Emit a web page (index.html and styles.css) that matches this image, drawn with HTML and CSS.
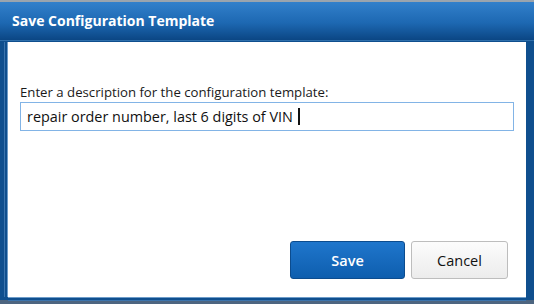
FILE: index.html
```html
<!DOCTYPE html>
<html>
<head>
    <meta charset="UTF-8">
    <title>Save Configuration Template</title>
    <link rel="stylesheet" href="styles.css">
</head>
<body>
    <div class="window">
        <div class="title-bar">Save Configuration Template</div>
        <div class="client">
            <div class="form">
                <label class="prompt" for="description">Enter a description for the configuration template:</label>
                <div class="text-box" id="description">repair order number, last 6 digits of VIN<span class="caret"></span></div>
            </div>
            <div class="actions">
                <button class="btn btn-primary">Save</button>
                <button class="btn btn-secondary">Cancel</button>
            </div>
        </div>
    </div>
</body>
</html>
```

FILE: styles.css
```css
html, body {
    margin: 0;
    padding: 0;
}
body {
    width: 534px;
    height: 304px;
    overflow: hidden;
    background: #4d6580;
    font-family: "Open Sans", "Noto Sans", sans-serif;
}
.window {
    height: 298px;
    border-top: 2px solid #9aa4ae;
    background: #0f4f8e;
    display: flex;
    flex-direction: column;
}
.title-bar {
    height: 39px;
    box-sizing: border-box;
    padding: 0 12px 2px 12px;
    display: flex;
    align-items: center;
    background: linear-gradient(#3280cb, #1d68b2 55%, #0b4684);
    border-bottom: 1px solid #2f6fab;
    color: white;
    font-weight: bold;
    font-size: 14px;
}
.client {
    flex: 1;
    margin: 1px 8px 3px 8px;
    background: white;
    box-shadow: -1px 0 0 #6d9cc9, 0 1px 0 #6d9cc9, -3px 0 0 #0f4f8e, -4px 0 0 #3b74ad, 0 3px 0 #0f4f8e, 0 4px 0 #3b74ad;
    display: flex;
    flex-direction: column;
    justify-content: space-between;
}
.form {
    padding: 41px 12px 0 12px;
}
.prompt {
    display: block;
    font-size: 13.2px;
    line-height: 18px;
    color: #1a1a1a;
    margin-bottom: 1px;
}
.text-box {
    height: 29px;
    box-sizing: border-box;
    border: 1px solid #82b4e6;
    padding: 0 6px;
    display: flex;
    align-items: center;
    font-size: 14.4px;
    color: #111;
}
.caret {
    display: inline-block;
    width: 2px;
    height: 17px;
    background: #111;
    margin-left: 5px;
}
.actions {
    display: flex;
    justify-content: flex-end;
    gap: 6px;
    padding: 0 18px 18px 0;
}
.btn {
    height: 38px;
    border-radius: 3px;
    font-family: inherit;
    font-size: 14.5px;
    cursor: pointer;
}
.btn-primary {
    width: 115px;
    border: 1px solid #0c4c8e;
    background: linear-gradient(#1f76cc, #0e5eae);
    color: white;
    font-weight: 600;
}
.btn-secondary {
    width: 97px;
    border: 1px solid #bdbdbd;
    background: linear-gradient(#fcfcfc, #ececec);
    color: #111;
}
```
